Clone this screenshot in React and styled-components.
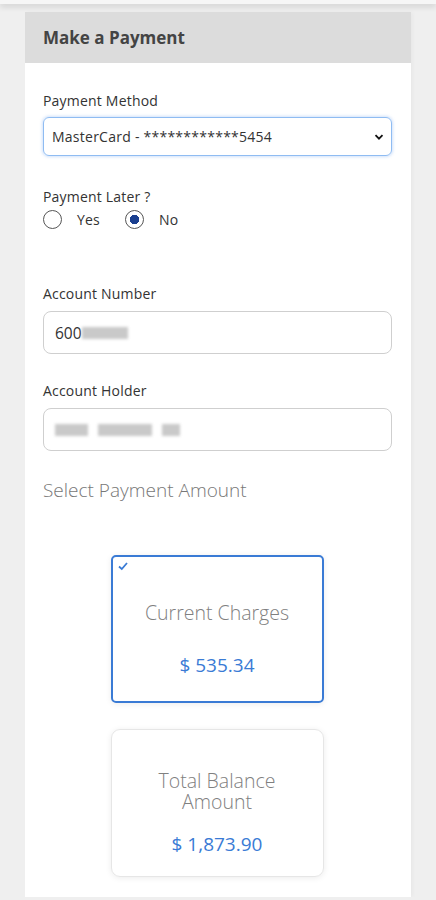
import React from 'react';
import styled, { createGlobalStyle } from 'styled-components';

const Global = createGlobalStyle`
  body {
    margin: 0;
    background: #efefef;
    font-family: 'Open Sans', 'Noto Sans', sans-serif;
    color: #333;
  }
`;

export default function App() {
  return (
    <>
      <Global />
      <TopShade />
      <Panel>
        <Header>Make a Payment</Header>
        <Body>
          <Field $gap={7}>
            <Label>Payment Method</Label>
            <SelectBox>
              <span>MasterCard - ************5454</span>
              <svg width="12" height="12" viewBox="0 0 12 12">
                <path d="M2.5 4.2 L6 7.7 L9.5 4.2" fill="none" stroke="#111" strokeWidth="1.8" />
              </svg>
            </SelectBox>
          </Field>

          <Field $gap={4} $top={32}>
            <Label>Payment Later ?</Label>
            <RadioRow>
              <RadioOption>
                <Radio />
                Yes
              </RadioOption>
              <RadioOption>
                <Radio $checked />
                No
              </RadioOption>
            </RadioRow>
          </Field>

          <Field $top={56}>
            <Label>Account Number</Label>
            <Input>
              600<Blur $w={46} />
            </Input>
          </Field>

          <Field $top={28}>
            <Label>Account Holder</Label>
            <Input>
              <Blur $w={33} />
              <Blur $w={54} $ml={10} />
              <Blur $w={18} $ml={10} />
            </Input>
          </Field>

          <SectionTitle>Select Payment Amount</SectionTitle>

          <Cards>
            <AmountCard $selected $pad={45} $gap={30}>
              <Check viewBox="0 0 12 12">
                <path d="M2 6.5 L4.8 9 L10 3" fill="none" stroke="#3a7bd5" strokeWidth="1.8" />
              </Check>
              <CardTitle>Current Charges</CardTitle>
              <CardAmount>$ 535.34</CardAmount>
            </AmountCard>
            <AmountCard $pad={40} $gap={20}>
              <CardTitle>
                Total Balance
                <br />
                Amount
              </CardTitle>
              <CardAmount>$ 1,873.90</CardAmount>
            </AmountCard>
          </Cards>
        </Body>
      </Panel>
    </>
  );
}

// styled components:

const TopShade = styled.div`
  height: 4px;
  background: #f6f6f6;
  box-shadow: 0 2px 6px rgba(0, 0, 0, 0.18);
  position: relative;
  z-index: 1;
`;

const Panel = styled.div`
  margin: 8px 25px 0 25px;
  background: #fff;
  min-height: 885px;
  box-shadow: 2px 0 4px rgba(0, 0, 0, 0.03);
`;

const Header = styled.div`
  height: 51px;
  background: #dcdcdc;
  display: flex;
  align-items: center;
  padding-left: 18px;
  font-size: 17px;
  font-weight: 700;
  color: #444;
`;

const Body = styled.div`
  padding: 29px 19px 0 18px;
`;

const Field = styled.div`
  display: flex;
  flex-direction: column;
  gap: ${(p) => (p.$gap ?? 8)}px;
  margin-top: ${(p) => p.$top || 0}px;
`;

const Label = styled.div`
  font-size: 14px;
  letter-spacing: 0.2px;
  color: #333;
  line-height: 18px;
`;

const SelectBox = styled.div`
  height: 39px;
  box-sizing: border-box;
  border: 1.5px solid #8fbcf2;
  border-radius: 6px;
  box-shadow: 0 0 3px 1px rgba(120, 170, 240, 0.35);
  display: flex;
  align-items: center;
  justify-content: space-between;
  padding: 0 6px 0 8px;
  font-size: 14px;
  letter-spacing: 0.25px;
  color: #333;
`;

const RadioRow = styled.div`
  display: flex;
  gap: 25px;
`;

const RadioOption = styled.label`
  display: flex;
  align-items: center;
  gap: 15px;
  font-size: 14px;
  letter-spacing: 0.2px;
  color: #333;
`;

const Radio = styled.span`
  width: 19px;
  height: 19px;
  box-sizing: border-box;
  border-radius: 50%;
  border: 1.5px solid #555;
  background: ${(p) =>
    p.$checked ? 'radial-gradient(circle, #1a3f8f 0 4.5px, #fff 5px)' : '#fff'};
`;

const Input = styled.div`
  height: 43px;
  box-sizing: border-box;
  border: 1px solid #cfcfcf;
  border-radius: 8px;
  display: flex;
  align-items: center;
  padding: 0 11px;
  font-size: 15.5px;
  color: #333;
`;

const Blur = styled.span`
  display: inline-block;
  width: ${(p) => p.$w}px;
  height: 12px;
  margin-left: ${(p) => p.$ml || 0}px;
  background: #c9c9c9;
  filter: blur(1.5px);
`;

const SectionTitle = styled.div`
  margin-top: 26px;
  font-size: 19px;
  font-weight: 300;
  color: #777;
`;

const Cards = styled.div`
  margin-top: 52px;
  display: flex;
  flex-direction: column;
  align-items: center;
  gap: 26px;
  padding-right: 1px;
`;

const AmountCard = styled.div`
  position: relative;
  width: 213px;
  height: 148px;
  box-sizing: border-box;
  border: ${(p) => (p.$selected ? '2px solid #3a7bd5' : '1px solid #e6e6e6')};
  border-radius: ${(p) => (p.$selected ? '5px' : '9px')};
  box-shadow: 0 1px 6px rgba(0, 0, 0, 0.08);
  display: flex;
  flex-direction: column;
  align-items: center;
  padding-top: ${(p) => p.$pad}px;
  gap: ${(p) => p.$gap}px;
  text-align: center;
`;

const Check = styled.svg`
  position: absolute;
  top: 3px;
  left: 4px;
  width: 12px;
  height: 12px;
`;

const CardTitle = styled.div`
  font-size: 19.5px;
  font-weight: 300;
  color: #808080;
  line-height: 21px;
`;

const CardAmount = styled.div`
  font-size: 19px;
  line-height: 24px;
  color: #3a7bd5;
`;
